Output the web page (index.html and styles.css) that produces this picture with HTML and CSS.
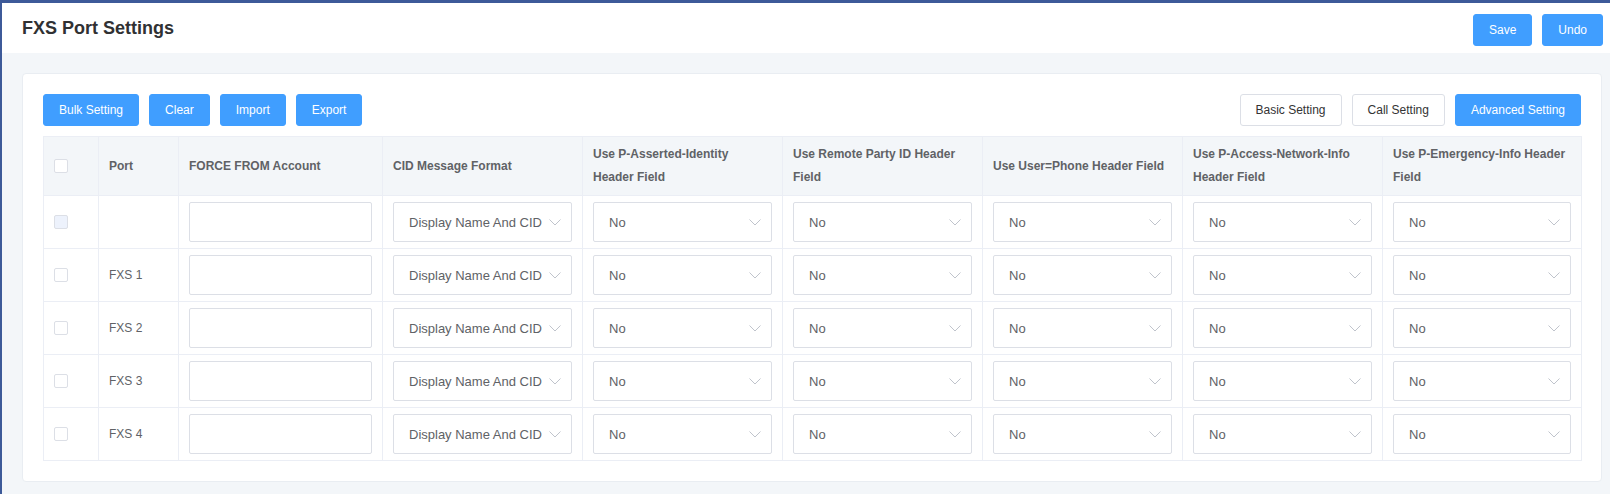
FILE: index.html
```html
<!DOCTYPE html>
<html lang="en">
<head>
    <meta charset="UTF-8">
    <meta name="viewport" content="width=device-width, initial-scale=1.0">
    <title>FXS Port Settings</title>
    <link rel="stylesheet" href="styles.css">
</head>
<body>
    <header class="page-head">
        <h1>FXS Port Settings</h1>
        <div class="btn-group">
            <button class="btn primary">Save</button>
            <button class="btn primary">Undo</button>
        </div>
    </header>
    <main class="card">
        <div class="toolbar">
            <div class="btn-group">
                <button class="btn primary">Bulk Setting</button>
                <button class="btn primary">Clear</button>
                <button class="btn primary">Import</button>
                <button class="btn primary">Export</button>
            </div>
            <div class="btn-group">
                <button class="btn">Basic Setting</button>
                <button class="btn">Call Setting</button>
                <button class="btn primary">Advanced Setting</button>
            </div>
        </div>

        <table class="port-table">
            <colgroup>
                <col class="col-check">
                <col class="col-port">
                <col class="col-force">
                <col class="col-field">
                <col class="col-field">
                <col class="col-field">
                <col class="col-field">
                <col class="col-field">
                <col class="col-last">
            </colgroup>
            <thead>
                <tr>
                    <th><span class="checkbox"></span></th>
                    <th>Port</th>
                    <th>FORCE FROM Account</th>
                    <th>CID Message Format</th>
                    <th>Use P-Asserted-Identity Header Field</th>
                    <th>Use Remote Party ID Header Field</th>
                    <th>Use User=Phone Header Field</th>
                    <th>Use P-Access-Network-Info Header Field</th>
                    <th>Use P-Emergency-Info Header Field</th>
                </tr>
            </thead>
            <tbody>
                <!-- filled by script -->
            </tbody>
        </table>
    </main>
    <script>
        const ports = ['', 'FXS 1', 'FXS 2', 'FXS 3', 'FXS 4'];
        const chevron = '<svg width="12" height="7" viewBox="0 0 12 7"><path d="M0.5 0.5 L6 6 L11.5 0.5" fill="none" stroke="#c0c4cc" stroke-width="1"/></svg>';

        function selectBox(text) {
            return `<div class="select"><span>${text}</span>${chevron}</div>`;
        }

        function renderTable() {
            const tbody = document.querySelector('.port-table tbody');
            ports.forEach((port, index) => {
                const row = document.createElement('tr');
                let cells = `
                    <td><span class="checkbox${index === 0 ? ' disabled' : ''}"></span></td>
                    <td>${port}</td>
                    <td><input type="text" class="text-input"></td>
                    <td>${selectBox('Display Name And CID')}</td>
                `;
                for (let i = 0; i < 5; i++) {
                    cells += `<td>${selectBox('No')}</td>`;
                }
                row.innerHTML = cells;
                tbody.appendChild(row);
            });
        }

        renderTable();
    </script>
</body>
</html>
```

FILE: styles.css
```css
html {
    background-color: #f3f6f9;
}
body {
    margin: 0;
    min-height: 100vh;
    box-sizing: border-box;
    border-top: 3px solid #3d5a99;
    border-left: 2px solid #3d5a99;
    background-color: #f3f6f9;
    font-family: "Liberation Sans", Arial, sans-serif;
    color: #303133;
    position: relative;
}
body::before {
    content: "";
    position: absolute;
    left: -2px;
    top: 162px;
    width: 2px;
    height: 40px;
    background-color: #4a90e8;
}
.page-head {
    display: flex;
    align-items: center;
    justify-content: space-between;
    height: 50px;
    padding: 0 7px 0 20px;
    background: white;
}
.page-head h1 {
    margin: 0;
    font-size: 18px;
    font-weight: bold;
    color: #303133;
}
.page-head .btn-group {
    margin-top: 3px;
}
.btn-group {
    display: flex;
    gap: 10px;
}
.btn {
    height: 32px;
    padding: 0 15px;
    font-family: inherit;
    font-size: 12px;
    line-height: 30px;
    color: #333;
    background: white;
    border: 1px solid #dcdfe6;
    border-radius: 3px;
    cursor: pointer;
}
.btn.primary {
    color: white;
    background-color: #409eff;
    border-color: #409eff;
}
.card {
    display: block;
    margin: 20px 8px 14px 20px;
    padding: 20px;
    background: white;
    border: 1px solid #e9edf2;
    border-radius: 4px;
}
.toolbar {
    display: flex;
    justify-content: space-between;
    margin-bottom: 10px;
}
.port-table {
    width: 1538px;
    border-collapse: collapse;
    table-layout: fixed;
}
.col-check { width: 55px; }
.col-port { width: 80px; }
.col-force { width: 204px; }
.col-field { width: 200px; }
.col-last { width: 199px; }
th, td {
    border: 1px solid #ebeef5;
    padding: 6px 10px;
    text-align: left;
    vertical-align: middle;
}
th {
    padding-right: 12px;
    background-color: #f3f6f9;
    font-size: 12px;
    font-weight: bold;
    line-height: 23px;
    color: #606266;
}
td {
    font-size: 12px;
    line-height: 23px;
    color: #606266;
}
.checkbox {
    display: block;
    width: 14px;
    height: 14px;
    box-sizing: border-box;
    border: 1px solid #dcdfe6;
    border-radius: 2px;
    background: white;
}
.checkbox.disabled {
    background-color: #edf2fc;
}
.text-input {
    display: block;
    width: 100%;
    height: 40px;
    box-sizing: border-box;
    margin: 0;
    border: 1px solid #dcdfe6;
    border-radius: 2px;
    background: white;
}
.select {
    display: flex;
    align-items: center;
    justify-content: space-between;
    height: 40px;
    box-sizing: border-box;
    padding: 0 10px 0 15px;
    border: 1px solid #dcdfe6;
    border-radius: 2px;
    background: white;
    font-size: 13px;
    color: #606266;
}
.select svg {
    display: block;
    flex-shrink: 0;
}
```
